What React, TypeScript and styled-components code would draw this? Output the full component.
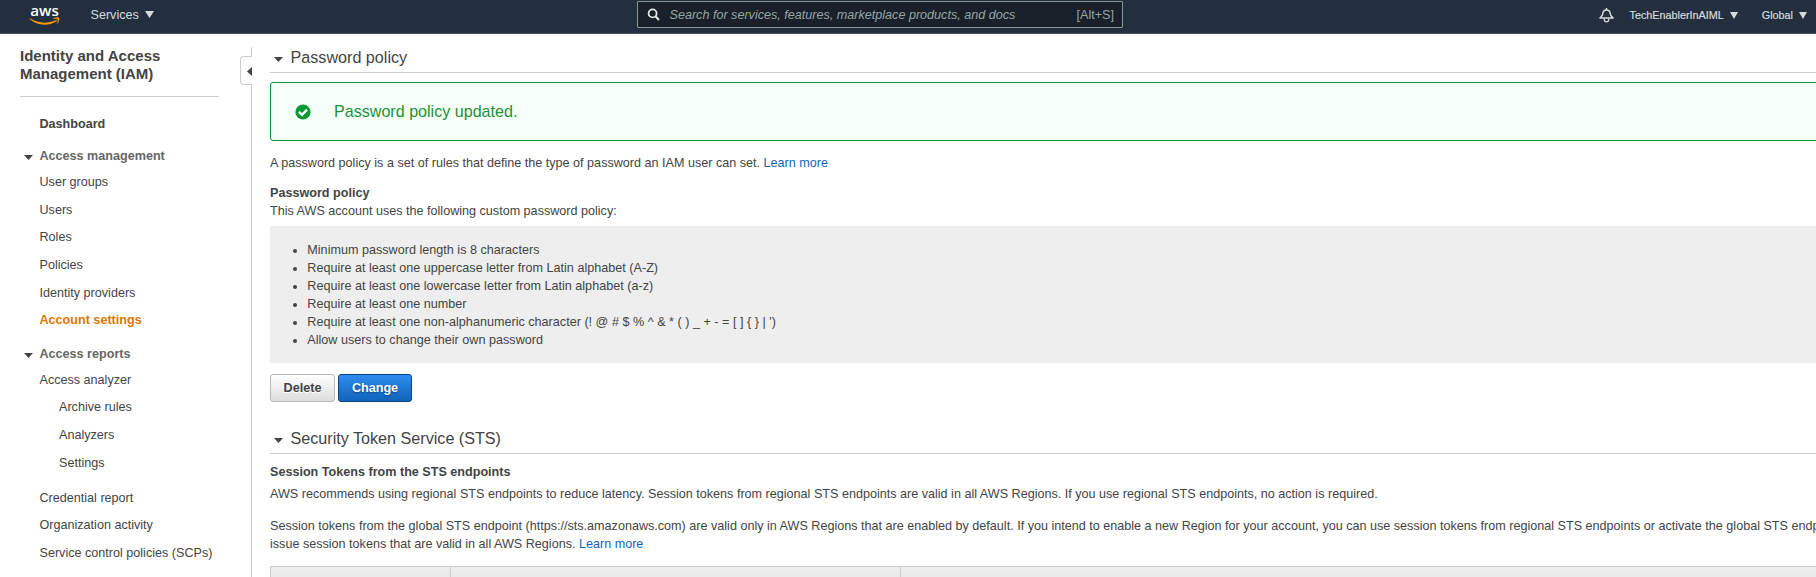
import React from "react";
import styled, { createGlobalStyle } from "styled-components";

const GlobalStyle = createGlobalStyle`
  * { box-sizing: border-box; }
  body {
    margin: 0;
    overflow: hidden;
    background: #fff;
    color: #444;
    font-family: "Liberation Sans", Arial, sans-serif;
    font-size: 12.6px;
    line-height: 18px;
  }
`;

const Page = styled.div`
  height: 577px;
  display: flex;
  flex-direction: column;
  overflow: hidden;
`;

/* Top navigation */
const TopBar = styled.header`
  flex: none;
  height: 34px;
  display: grid;
  grid-template-columns: 637px 486px 1fr;
  align-items: start;
  background: #232f3e;
  border-bottom: 1px solid #4f5160;
  color: #d5dbdb;
`;

const NavLeft = styled.div`
  display: flex;
  align-items: center;
  height: 29px;
  padding-left: 29px;
`;

const ServicesMenu = styled.div`
  display: flex;
  align-items: center;
  gap: 6px;
  margin-left: 30.5px;
`;

const SearchBox = styled.div`
  display: flex;
  align-items: center;
  height: 27px;
  margin-top: 1px;
  padding: 0 8px 0 9px;
  background: #1a2029;
  border: 1px solid #879596;
  border-radius: 1px;
  color: #95a5a6;
`;

const Placeholder = styled.span`
  flex: 1;
  margin-left: 9.5px;
  font-style: italic;
  white-space: nowrap;
`;

const Shortcut = styled.span`
  color: #95a5a6;
`;

const NavRight = styled.div`
  display: flex;
  justify-content: flex-end;
  align-items: center;
  height: 30px;
  padding-right: 9px;
  font-size: 10.8px;
`;

const NavItem = styled.div<{ $gap: number }>`
  display: flex;
  align-items: center;
  gap: 6px;
  margin-left: ${(p) => p.$gap}px;
  -webkit-text-stroke: 0.2px currentColor;
`;

/* Body */
const Body = styled.div`
  flex: 1;
  display: flex;
  min-height: 0;
`;

const Sidebar = styled.aside`
  flex: none;
  width: 240px;
  padding: 13px 21px 0 20px;
`;

const ServiceTitle = styled.h1`
  height: 50px;
  margin: 0;
  border-bottom: 1px solid #ccc;
  font-size: 15px;
  line-height: 18px;
  white-space: nowrap;
`;

const NavGroup = styled.nav<{ $top: number }>`
  margin-top: ${(p) => p.$top}px;
  padding-left: 19.5px;
`;

const GroupTitle = styled.div`
  display: flex;
  align-items: center;
  height: 18px;
  margin-left: -15.5px;
  margin-bottom: 3.6px;
  gap: 6.5px;
  color: #666;
  font-weight: bold;

  svg {
    margin-top: 3px;
    color: #444;
  }
`;

const NavLink = styled.div<{ $active?: boolean; $bold?: boolean; $nested?: boolean }>`
  height: 27.7px;
  line-height: 27.7px;
  padding-left: ${(p) => (p.$nested ? 19.5 : 0)}px;
  font-weight: ${(p) => (p.$active || p.$bold ? "bold" : "normal")};
  color: ${(p) => (p.$active ? "#e07700" : "#444")};
  white-space: nowrap;
`;

const Rail = styled.div`
  flex: none;
  width: 12px;
  margin-top: 13px;
  display: flex;
  flex-direction: column;
`;

const RailTop = styled.div`
  height: 9px;
  border-right: 1px solid #ccc;
`;

const RailTab = styled.div`
  height: 29px;
  display: flex;
  align-items: center;
  justify-content: flex-end;
  padding-top: 2px;
  border: 1px solid #ccc;
  border-right: 0;
  border-radius: 4px 0 0 4px;
`;

const RailLine = styled.div`
  flex: 1;
  border-right: 1px solid #ccc;
`;

const Main = styled.main`
  flex: 1;
  min-width: 0;
  margin-left: 18px;
  padding-top: 11px;
  overflow: hidden;
  white-space: nowrap;
`;

const SectionHeading = styled.h2`
  display: flex;
  align-items: center;
  gap: 7.5px;
  height: 28px;
  margin: 0;
  padding: 0 0 4px 4px;
  border-bottom: 1px solid #ccc;
  font-size: 16.15px;
  font-weight: normal;

  svg {
    margin-top: 5px;
  }
`;

const Alert = styled.div`
  display: flex;
  align-items: center;
  height: 59px;
  margin: 9px -4px 0 0;
  padding-left: 24px;
  gap: 23px;
  background: #f6fff8;
  border: 1px solid #009933;
  border-radius: 3px;
  color: #1d9136;
  font-size: 16.1px;
`;

const AlertText = styled.span`
  padding-bottom: 2px;
`;

const Line = styled.p<{ $top?: number; $bold?: boolean }>`
  height: 18px;
  margin: ${(p) => p.$top ?? 0}px 0 0;
  font-weight: ${(p) => (p.$bold ? "bold" : "normal")};
`;

const Link = styled.a`
  color: #1166bb;
`;

const Rules = styled.ul`
  height: 137px;
  margin: 6px 0 0;
  padding: 15px 0 0 37.3px;
  background: #eee;
  letter-spacing: 0.012px;
`;

const Rule = styled.li`
  height: 18px;
`;

const ButtonRow = styled.div`
  display: flex;
  gap: 3px;
  margin: 11px 0 24px;
`;

const Button = styled.button<{ $primary?: boolean }>`
  width: ${(p) => (p.$primary ? 74 : 65)}px;
  height: 28px;
  padding: 0;
  border: 1px solid ${(p) => (p.$primary ? "#0a4280" : "#b9b9b9")};
  border-radius: 3px;
  background: ${(p) =>
    p.$primary ? "linear-gradient(#2e8df0, #1164ba)" : "linear-gradient(#fff, #ddd)"};
  color: ${(p) => (p.$primary ? "#fff" : "#444")};
  font: bold 12.6px "Liberation Sans", Arial, sans-serif;
  text-shadow: ${(p) => (p.$primary ? "0 1px 2px #0a4280" : "0 1px 0 #fff")};
`;

const TableHead = styled.div`
  display: grid;
  grid-template-columns: 179px 450px 1fr;
  height: 30px;
  margin-top: 13px;
  border: 1px solid #ccc;
  border-right: 0;
  background: linear-gradient(#eee, #e2e2e2);
`;

const HeadCell = styled.div`
  & + & { border-left: 1px solid #ccc; }
`;

const Caret = ({ w = 9, h = 5 }: { w?: number; h?: number }) => (
  <svg width={w} height={h} viewBox="0 0 10 5" preserveAspectRatio="none">
    <path d="M0 0H10L5 5Z" fill="currentColor" />
  </svg>
);

const AwsMark = styled.div`
  position: relative;
  width: 31px;
  height: 26px;
  color: #fff;
`;

const AwsWord = styled.span`
  display: block;
  padding: 1px 0 0 1.2px;
  font: 600 15.2px/15px "Open Sans", sans-serif;
`;

const Smile = styled.svg`
  position: absolute;
  left: 0;
  top: 15px;
`;

const AwsLogo = () => (
  <AwsMark>
    <AwsWord>aws</AwsWord>
    <Smile width="31" height="9" viewBox="0 0 31 9">
      <path d="M.9 1.3C9 6.2 17.5 7.1 27 3.2C27.9 2.9 28.3 3.6 27.5 4.2C19 9.6 8 8.8 .7 2.1Z" fill="#f90" />
      <path d="M24 1.6C26 .4 29.3 .2 30 1C30.5 1.8 29.8 4.8 28.2 6.6C28.7 4.6 29.2 2.8 28.8 2.2C28.3 1.6 26 1.6 24 1.6Z" fill="#f90" stroke="#f90" strokeWidth=".4" />
    </Smile>
  </AwsMark>
);

const SearchIcon = () => (
  <svg width="13" height="13" viewBox="0 0 13 13" fill="none" stroke="#e3e8e8" strokeWidth="1.8">
    <circle cx="5.6" cy="5.4" r="4" />
    <path d="M8.5 8.3L12 12" strokeWidth="2.1" />
  </svg>
);

const BellIcon = () => (
  <svg width="15" height="15" viewBox="0 0 15 15" fill="none" stroke="#d5dbdb" strokeWidth="1.5">
    <path d="M7.5 0V2" />
    <path d="M.9 10.1L3.2 7.6L4 4.6C4.4 3 5.7 2.1 7.5 2.1S10.6 3 11 4.6L11.8 7.6L14.1 10.1Z" strokeLinejoin="round" />
    <path d="M5.3 10.5V11.8C5.3 14.6 9.7 14.6 9.7 11.8V10.5" strokeWidth="1.3" />
  </svg>
);

const CheckIcon = () => (
  <svg width="16" height="16" viewBox="0 0 16 16">
    <circle cx="8" cy="8" r="7.6" fill="#009933" />
    <path d="M3.9 7.9L7 10.8L12.1 5.7" fill="none" stroke="#fff" strokeWidth="2.5" />
  </svg>
);

const managementLinks = ["User groups", "Users", "Roles", "Policies", "Identity providers", "Account settings"];
const analyzerLinks = ["Archive rules", "Analyzers", "Settings"];
const reportLinks = ["Credential report", "Organization activity", "Service control policies (SCPs)"];
const rules = [
  "Minimum password length is 8 characters",
  "Require at least one uppercase letter from Latin alphabet (A-Z)",
  "Require at least one lowercase letter from Latin alphabet (a-z)",
  "Require at least one number",
  "Require at least one non-alphanumeric character (! @ # $ % ^ & * ( ) _ + - = [ ] { } | ')",
  "Allow users to change their own password",
];

export default function App() {
  return (
    <Page>
      <GlobalStyle />
      <TopBar>
        <NavLeft>
          <AwsLogo />
          <ServicesMenu>
            Services
            <Caret w={9} h={7} />
          </ServicesMenu>
        </NavLeft>
        <SearchBox>
          <SearchIcon />
          <Placeholder>Search for services, features, marketplace products, and docs</Placeholder>
          <Shortcut>[Alt+S]</Shortcut>
        </SearchBox>
        <NavRight>
          <BellIcon />
          <NavItem $gap={16}>
            TechEnablerInAIML
            <Caret w={8} h={7} />
          </NavItem>
          <NavItem $gap={24}>
            Global
            <Caret w={8} h={7} />
          </NavItem>
        </NavRight>
      </TopBar>
      <Body>
        <Sidebar>
          <ServiceTitle>
            Identity and Access
            <br />
            Management (IAM)
          </ServiceTitle>
          <NavGroup $top={14.4}>
            <NavLink $bold>Dashboard</NavLink>
          </NavGroup>
          <NavGroup $top={8.2}>
            <GroupTitle>
              <Caret w={9} h={5} />
              Access management
            </GroupTitle>
            {managementLinks.map((label) => (
              <NavLink key={label} $active={label === "Account settings"}>
                {label}
              </NavLink>
            ))}
          </NavGroup>
          <NavGroup $top={10.2}>
            <GroupTitle>
              <Caret w={9} h={5} />
              Access reports
            </GroupTitle>
            <NavLink>Access analyzer</NavLink>
            {analyzerLinks.map((label) => (
              <NavLink key={label} $nested>
                {label}
              </NavLink>
            ))}
          </NavGroup>
          <NavGroup $top={7.2}>
            {reportLinks.map((label) => (
              <NavLink key={label}>{label}</NavLink>
            ))}
          </NavGroup>
        </Sidebar>
        <Rail>
          <RailTop />
          <RailTab>
            <svg width="5" height="9" viewBox="0 0 5 9">
              <path d="M5 0V9L0 4.5Z" fill="#444" />
            </svg>
          </RailTab>
          <RailLine />
        </Rail>
        <Main>
          <SectionHeading>
            <Caret w={9} h={5} />
            Password policy
          </SectionHeading>
          <Alert>
            <CheckIcon />
            <AlertText>Password policy updated.</AlertText>
          </Alert>
          <Line $top={13}>
            A password policy is a set of rules that define the type of password an IAM user can set.{" "}
            <Link>Learn more</Link>
          </Line>
          <Line $top={12} $bold>
            Password policy
          </Line>
          <Line>This AWS account uses the following custom password policy:</Line>
          <Rules>
            {rules.map((rule) => (
              <Rule key={rule}>{rule}</Rule>
            ))}
          </Rules>
          <ButtonRow>
            <Button>Delete</Button>
            <Button $primary>Change</Button>
          </ButtonRow>
          <SectionHeading>
            <Caret w={9} h={5} />
            Security Token Service (STS)
          </SectionHeading>
          <Line $top={9} $bold>
            Session Tokens from the STS endpoints
          </Line>
          <Line $top={4}>
            AWS recommends using regional STS endpoints to reduce latency. Session tokens from regional STS endpoints
            are valid in all AWS Regions. If you use regional STS endpoints, no action is required.
          </Line>
          <Line $top={14}>
            Session tokens from the global STS endpoint (https://sts.amazonaws.com) are valid only in AWS Regions that
            are enabled by default. If you intend to enable a new Region for your account, you can use session tokens
            from regional STS endpoints or activate the global STS endpoint to
          </Line>
          <Line>
            issue session tokens that are valid in all AWS Regions. <Link>Learn more</Link>
          </Line>
          <TableHead>
            <HeadCell />
            <HeadCell />
            <HeadCell />
          </TableHead>
        </Main>
      </Body>
    </Page>
  );
}
